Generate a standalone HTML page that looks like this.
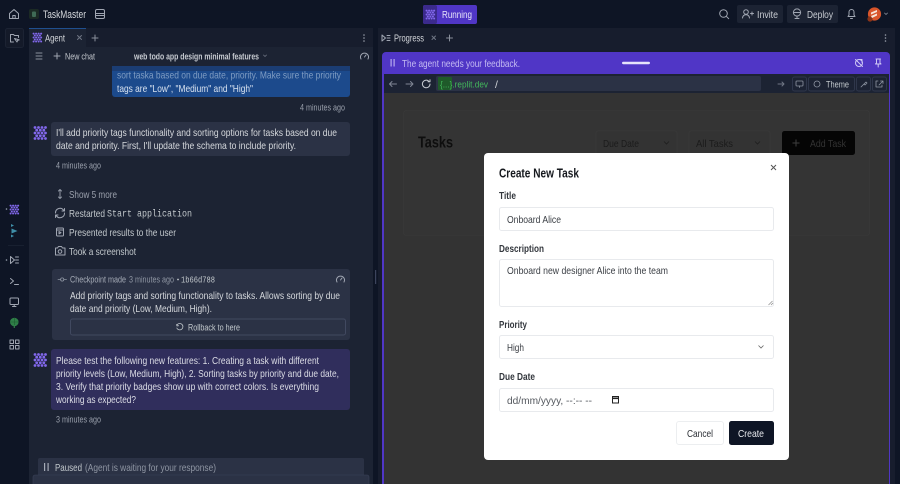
<!DOCTYPE html>
<html><head><meta charset="utf-8"><style>
html,body{margin:0;padding:0;background:#0e1525;width:900px;height:484px;overflow:hidden}
svg{display:block;filter:blur(.3px)}
text{font-family:"Liberation Sans",sans-serif;font-size:10.5px;fill:#c2c8cc}
.i{fill:none;stroke:#a0a6b2;stroke-width:1;stroke-linecap:round;stroke-linejoin:round}
</style></head><body>
<svg width="900" height="484" viewBox="0 0 900 484" xmlns="http://www.w3.org/2000/svg">
<defs>
<g id="ag">
<g fill="#8268ec">
<circle cx="1.500" cy="1.500" r="1.400"/><circle cx="5" cy="1.500" r="1.400"/><circle cx="8.500" cy="1.500" r="1.400"/><circle cx="12" cy="1.500" r="1.400"/>
<circle cx="3.200" cy="4.200" r="1.400"/><circle cx="6.800" cy="4.200" r="1.400"/><circle cx="10.300" cy="4.200" r="1.400"/>
<circle cx="1.500" cy="7" r="1.400"/><circle cx="5" cy="7" r="1.400"/><circle cx="8.500" cy="7" r="1.400"/><circle cx="12" cy="7" r="1.400"/>
<circle cx="3.200" cy="9.800" r="1.400"/><circle cx="6.800" cy="9.800" r="1.400"/><circle cx="10.300" cy="9.800" r="1.400"/>
<circle cx="1.500" cy="12.500" r="1.400"/><circle cx="5" cy="12.500" r="1.400"/><circle cx="8.500" cy="12.500" r="1.400"/><circle cx="12" cy="12.500" r="1.400"/>
</g></g>
</defs>

<!-- base -->
<rect width="900" height="484" fill="#0e1525"/>
<!-- left panel -->
<rect x="29" y="28" width="344" height="456" fill="#1c2333"/>
<rect x="29" y="28" width="344" height="19" fill="#171d2d"/>
<rect x="29" y="28" width="57" height="19" fill="#1c2333"/>
<rect x="29" y="28" width="57" height="1" fill="#1f4f8f"/>
<!-- right panel -->
<rect x="378" y="28" width="517" height="456" fill="#171d2d"/>
<rect x="375" y="270" width="1.200" height="14" fill="#3c445c"/>

<!-- top bar -->
<path class="i" d="M9.500 13.500l4.500-4 4.500 4v5h-9zM12.800 18.500v-3h2.400v3"/>
<rect x="29" y="9" width="10" height="10" rx="2" fill="#1b2a24"/><rect x="32" y="11.500" width="4" height="5.500" rx="1" fill="#3f6b55"/>
<text x="43" y="18" textLength="43" lengthAdjust="spacingAndGlyphs" style="font-size:11px;fill:#d5d8dc">TaskMaster</text>
<g class="i"><rect x="95.500" y="9.500" width="9" height="9" rx="1.500"/><path d="M95.500 13.500h9M95.500 15.500h9"/></g>

<rect x="423" y="5" width="54" height="19" rx="2" fill="#5036c6"/>
<rect x="423" y="5" width="14" height="19" rx="2" fill="#3b2a8c"/>
<use href="#ag" transform="translate(425.500,9.500) scale(.72)"/>
<text x="442" y="18" textLength="30" lengthAdjust="spacingAndGlyphs" style="font-size:10.500px;fill:#e8e5fa">Running</text>

<g class="i"><circle cx="723.500" cy="13.500" r="3.800"/><path d="M726.300 16.300l2.400 2.400"/></g>
<rect x="737" y="5" width="46" height="18" rx="2" fill="#1c2333"/>
<g class="i"><circle cx="746" cy="12" r="2.300"/><path d="M742.500 18c.3-2.500 1.700-3.300 3.500-3.300s3.200.8 3.500 3.300M750.500 13.500h3M752 12v3"/></g>
<text x="757" y="18" textLength="21" lengthAdjust="spacingAndGlyphs" style="font-size:10.500px;fill:#c8ccd2">Invite</text>
<rect x="787" y="5" width="51" height="18" rx="2" fill="#1c2333"/>
<g class="i"><circle cx="797" cy="12.500" r="3.600"/><path d="M793.400 12.500h7.200M797 16v2.500M795 18.500h4"/></g>
<text x="807" y="18" textLength="26" lengthAdjust="spacingAndGlyphs" style="font-size:10.500px;fill:#c8ccd2">Deploy</text>
<path class="i" d="M848 16.500h7l-1-1.500v-3a2.500 2.500 0 0 0-5 0v3zM850.500 18.500h2"/>
<circle cx="874.500" cy="14" r="6.600" fill="#d9552a"/><circle cx="870" cy="19" r="2.600" fill="#8b3317"/>
<path d="M871 12.500l6-2.500v2l-6 2.500zM871 16l6-2.500v2l-5 2.500z" fill="#f6e4d8"/>
<path class="i" style="stroke:#8a909c;stroke-width:.8" d="M884.500 13l1.500 1.500 1.500-1.500"/>

<!-- left rail -->
<rect x="5.500" y="28.500" width="18" height="19" rx="2" fill="#141a29" stroke="#1c2333"/>
<path class="i" d="M10.500 42v-7.500h3l1 1h4v2M10.500 42h3M14.500 38.500l2.500 3.500 .6-1.600 1.600-.5z"/>
<circle cx="6.500" cy="209" r=".8" fill="#9aa2b0"/>
<use href="#ag" transform="translate(9.500,204.500) scale(.72)"/>
<path d="M11 224l3 1.500-3 1.500zM11.500 228.500l6 2.500-6 2.500zM11 234.500l3 1.500-3 1.500z" fill="#3f8fa8"/>
<rect x="8" y="245" width="16" height=".8" fill="#1c2333"/>
<circle cx="6.500" cy="260" r=".8" fill="#9aa2b0"/>
<path class="i" d="M10.500 256.500l4 3.500-4 3.500zM15.500 257h3M15.500 260h3M15.500 263h3"/>
<path class="i" d="M10.500 278.500l3 2.500-3 2.500M14.500 284.500h4"/>
<g class="i"><rect x="10" y="298" width="8.500" height="6.500" rx="1"/><path d="M14.200 304.500v2M12.500 306.500h3.500"/></g>
<circle cx="14.300" cy="322" r="4.300" fill="#2f7f48"/><path d="M14.300 325v3" stroke="#2f7f48" stroke-width="1.200"/><path d="M10 322h8.500M14.300 318v7" stroke="#1c5a30" stroke-width=".6"/>
<g class="i"><rect x="10" y="340" width="3.500" height="3.500"/><rect x="15.500" y="340" width="3.500" height="3.500"/><rect x="10" y="345.500" width="3.500" height="3.500"/><rect x="15.500" y="345.500" width="3.500" height="3.500"/></g>

<!-- agent tab -->
<use href="#ag" transform="translate(32.500,32.500) scale(.72)"/>
<text x="45" y="41.500" textLength="20" lengthAdjust="spacingAndGlyphs" style="font-size:10.500px;fill:#d5d8dc">Agent</text>
<path class="i" style="stroke:#6f7684" d="M77.500 35.500l4 4M81.500 35.500l-4 4"/>
<path class="i" style="stroke:#8a909c" d="M92 38h6M95 35v6"/>
<g fill="#9aa0ac"><circle cx="364" cy="35" r=".8"/><circle cx="364" cy="38" r=".8"/><circle cx="364" cy="41" r=".8"/></g>

<!-- chat header -->
<path class="i" style="stroke:#8a909c" d="M36 53h6M36 56h6M36 59h6"/>
<path class="i" style="stroke:#a0a6b2" d="M54 56h6M57 53v6"/>
<text x="65" y="59.500" textLength="30" lengthAdjust="spacingAndGlyphs" style="font-size:9.500px;fill:#c2c6cc">New chat</text>
<text x="134" y="59.500" textLength="125" lengthAdjust="spacingAndGlyphs" style="font-size:9.500px;fill:#c8ccd2;font-weight:700">web todo app design minimal features</text>
<path class="i" style="stroke:#6f7684;stroke-width:.8" d="M263.500 55l1.500 1.500 1.500-1.500"/>
<path class="i" d="M361 59a4 4 0 1 1 7 0M364.500 57l1.500-2"/>

<!-- user bubble -->
<path d="M112 66h238v28a3 3 0 0 1-3 3H115a3 3 0 0 1-3-3z" fill="#1c4a8c"/>
<rect x="112" y="66" width="238" height="5" fill="#1b3662" opacity=".6"/>
<text x="117" y="78.500" textLength="224" lengthAdjust="spacingAndGlyphs" style="font-size:10.500px;fill:#7f9cc2">sort taska based on due date, priority. Make sure the priority</text>
<text x="117" y="92" textLength="136" lengthAdjust="spacingAndGlyphs" style="font-size:10.500px;fill:#d8e2f0">tags are "Low", "Medium" and "High"</text>
<text x="300" y="110.500" textLength="45" lengthAdjust="spacingAndGlyphs" style="font-size:9.500px;fill:#9aa0ac">4 minutes ago</text>

<!-- agent bubble 1 -->
<use href="#ag" transform="translate(33.500,126)"/>
<rect x="51" y="122" width="299" height="34" rx="3" fill="#2b3245"/>
<text x="56" y="136" textLength="281" lengthAdjust="spacingAndGlyphs" style="font-size:10.500px;fill:#d5d8dc">I'll add priority tags functionality and sorting options for tasks based on due</text>
<text x="56" y="149" textLength="240" lengthAdjust="spacingAndGlyphs" style="font-size:10.500px;fill:#d5d8dc">date and priority. First, I'll update the schema to include priority.</text>
<text x="56" y="168.500" textLength="45" lengthAdjust="spacingAndGlyphs" style="font-size:9.500px;fill:#9aa0ac">4 minutes ago</text>

<!-- actions -->
<path class="i" style="stroke:#8f96a3" d="M60 189.500v9M58.500 191l1.500-1.500 1.500 1.500M58.500 197l1.500 1.500 1.500-1.500"/>
<text x="69" y="198" textLength="48" lengthAdjust="spacingAndGlyphs" style="font-size:10.500px;fill:#9aa0ac">Show 5 more</text>
<path class="i" d="M55.500 213a4.500 4.500 0 0 1 8-3l1 1M64.500 213a4.500 4.500 0 0 1-8 3l-1-1M64.500 208.500v2.500h-2.500M55.500 217.500v-2.500h2.500"/>
<text x="69" y="217" textLength="36" lengthAdjust="spacingAndGlyphs" style="font-size:10.500px;fill:#c2c8cc">Restarted</text>
<text x="107" y="216.500" textLength="85" lengthAdjust="spacingAndGlyphs" style="font-family:'Liberation Mono',monospace;font-size:10px;fill:#c2c8cc">Start application</text>
<g class="i"><rect x="56.500" y="228" width="7" height="8" rx="1"/><path d="M56.500 230h7M59 231.500l2 1.200-2 1.200z"/></g>
<text x="69" y="236" textLength="107" lengthAdjust="spacingAndGlyphs" style="font-size:10.500px;fill:#c2c8cc">Presented results to the user</text>
<g class="i"><path d="M55.500 248h2l1-1.500h3l1 1.500h2.500v7h-9.500z"/><circle cx="60" cy="251.500" r="1.800"/></g>
<text x="69" y="255" textLength="67" lengthAdjust="spacingAndGlyphs" style="font-size:10.500px;fill:#c2c8cc">Took a screenshot</text>

<!-- checkpoint -->
<rect x="52" y="269" width="298" height="71" rx="3" fill="#2b3245"/>
<path class="i" style="stroke:#8f96a3;stroke-width:.8" d="M58 279.500h2.500M64 279.500h2.500"/><circle cx="62.200" cy="279.500" r="1.600" fill="none" stroke="#8f96a3" stroke-width=".8"/>
<text x="70" y="282.500" textLength="56" lengthAdjust="spacingAndGlyphs" style="font-size:9px;fill:#a5abb6">Checkpoint made</text>
<text x="129" y="282.500" textLength="45" lengthAdjust="spacingAndGlyphs" style="font-size:9px;fill:#8f96a3">3 minutes ago</text>
<circle cx="178" cy="279.500" r=".9" fill="#c2c8cc"/>
<text x="181" y="282.500" textLength="34" lengthAdjust="spacingAndGlyphs" style="font-family:'Liberation Mono',monospace;font-size:9px;fill:#c2c8cc">1b66d788</text>
<path class="i" d="M337 282a4 4 0 1 1 7 0M340.500 280l1.500-2"/>
<text x="70" y="299" textLength="270" lengthAdjust="spacingAndGlyphs" style="font-size:10.500px;fill:#d5d8dc">Add priority tags and sorting functionality to tasks. Allows sorting by due</text>
<text x="70" y="312" textLength="142" lengthAdjust="spacingAndGlyphs" style="font-size:10.500px;fill:#d5d8dc">date and priority (Low, Medium, High).</text>
<rect x="70.500" y="319" width="275" height="16" rx="2" fill="#2b3245" stroke="#414960"/>
<path class="i" style="stroke:#c2c8cc;stroke-width:.8" d="M177 325a3.200 3.200 0 1 1-.2 3M176.500 324.500l.5 1.500 1.500-.3"/>
<text x="188" y="330.500" textLength="52" lengthAdjust="spacingAndGlyphs" style="font-size:9px;fill:#c2c8cc">Rollback to here</text>

<!-- agent bubble 2 -->
<use href="#ag" transform="translate(33.500,353)"/>
<rect x="51" y="349" width="299" height="61" rx="3" fill="#302e5c"/>
<text x="56" y="364" textLength="263" lengthAdjust="spacingAndGlyphs" style="font-size:10.500px;fill:#dcdde6">Please test the following new features: 1. Creating a task with different</text>
<text x="56" y="377" textLength="283" lengthAdjust="spacingAndGlyphs" style="font-size:10.500px;fill:#dcdde6">priority levels (Low, Medium, High), 2. Sorting tasks by priority and due date,</text>
<text x="56" y="390" textLength="263" lengthAdjust="spacingAndGlyphs" style="font-size:10.500px;fill:#dcdde6">3. Verify that priority badges show up with correct colors. Is everything</text>
<text x="56" y="403" textLength="80" lengthAdjust="spacingAndGlyphs" style="font-size:10.500px;fill:#dcdde6">working as expected?</text>
<text x="56" y="422.500" textLength="45" lengthAdjust="spacingAndGlyphs" style="font-size:9.500px;fill:#9aa0ac">3 minutes ago</text>

<!-- paused -->
<rect x="38" y="458" width="326" height="20" rx="2" fill="#2b3245"/>
<rect x="44" y="463" width="1.200" height="8" fill="#a5abb6"/><rect x="47.500" y="463" width="1.200" height="8" fill="#a5abb6"/>
<text x="55" y="471" textLength="27" lengthAdjust="spacingAndGlyphs" style="font-size:10.500px;fill:#c2c8cc">Paused</text>
<text x="85" y="471" textLength="131" lengthAdjust="spacingAndGlyphs" style="font-size:10.500px;fill:#8f96a3">(Agent is waiting for your response)</text>
<rect x="33" y="475" width="336" height="12" rx="2" fill="#2b3245" stroke="#3a4258" stroke-width=".6"/>

<!-- progress tab -->
<path class="i" d="M382 35l3.500 3-3.500 3zM387 35.500h3M387 38h3M387 40.500h3"/>
<text x="394" y="41.500" textLength="30" lengthAdjust="spacingAndGlyphs" style="font-size:10.500px;fill:#d5d8dc">Progress</text>
<path class="i" style="stroke:#6f7684" d="M432 36l3.500 3.500M435.500 36l-3.500 3.500"/>
<path class="i" style="stroke:#8a909c" d="M446.500 38h6M449.500 35v6"/>
<g fill="#9aa0ac"><circle cx="885.500" cy="35" r=".8"/><circle cx="885.500" cy="38" r=".8"/><circle cx="885.500" cy="41" r=".8"/></g>

<!-- purple frame -->
<path d="M382 56a4 4 0 0 1 4-4h500a4 4 0 0 1 4 4v428H382z" fill="#5036c6"/>
<rect x="390.500" y="59" width="1.200" height="7.500" fill="#b7abee"/><rect x="393.500" y="59" width="1.200" height="7.500" fill="#b7abee"/>
<text x="402" y="67" textLength="118" lengthAdjust="spacingAndGlyphs" style="font-size:10.500px;fill:#c4bbf2">The agent needs your feedback.</text>
<rect x="622" y="61.800" width="28" height="2.400" rx="1.200" fill="#e6e2fa"/>
<g class="i" style="stroke:#cfc8f5"><circle cx="859" cy="63" r="3.500"/><path d="M855.500 59.500l7 7M862 59.500h-3M862 59.500v3"/></g>
<path class="i" style="stroke:#cfc8f5" d="M876 59h4.500M876.500 59v4l-1 1h5.500l-1-1v-4M878.200 64v3"/>

<!-- url bar -->
<rect x="384" y="74" width="505" height="19" fill="#1c2333"/>
<path class="i" style="stroke:#7f8694" d="M389.500 84h7M392 81.500l-2.500 2.500 2.500 2.500"/>
<path class="i" style="stroke:#7f8694" d="M406 84h7M410.500 81.500l2.500 2.500-2.500 2.500"/>
<path class="i" style="stroke:#c8ccd2" d="M430 84a3.800 3.800 0 1 1-1.200-2.800M430 79.800v2h-2"/>
<rect x="436" y="76" width="325" height="15" rx="2" fill="#2b3245"/>
<rect x="438" y="77" width="14" height="13" rx="1" fill="#1f5a2a"/>
<text x="440" y="87.500" textLength="48" lengthAdjust="spacingAndGlyphs" style="font-size:9.500px;fill:#43b85c">{...}.replit.dev</text>
<text x="495" y="88" style="font-size:10.500px;fill:#d5d8dc">/</text>
<path class="i" style="stroke:#6f7684" d="M778 84h6M782 82l2 2-2 2"/>
<rect x="792.500" y="77" width="14" height="14" rx="2" fill="#1c2333" stroke="#2f374b"/>
<g class="i" style="stroke:#8f96a3;stroke-width:.8"><rect x="796" y="81" width="7" height="5" rx=".8"/><path d="M799.500 86v1.500"/></g>
<rect x="808.500" y="77" width="46" height="14" rx="2" fill="#1c2333" stroke="#2f374b"/>
<circle cx="817" cy="84" r="3" fill="none" stroke="#8f96a3" stroke-width=".8"/>
<text x="826" y="87.500" textLength="23" lengthAdjust="spacingAndGlyphs" style="font-size:9.500px;fill:#c2c8cc">Theme</text>
<rect x="856.500" y="77" width="14" height="14" rx="2" fill="#1c2333" stroke="#2f374b"/>
<path class="i" style="stroke:#8f96a3;stroke-width:.8" d="M861 87l3-3M864 84l2-2 1 1-2 2z"/>
<rect x="872.500" y="77" width="14" height="14" rx="2" fill="#1c2333" stroke="#2f374b"/>
<path class="i" style="stroke:#8f96a3;stroke-width:.8" d="M878 81h-2v6h6v-2M879 85l4-4M880.500 81h2.500v2.500"/>

<!-- dimmed app -->
<rect x="384" y="93" width="505" height="391" fill="#333333"/>
<rect x="403.500" y="110.500" width="466" height="125" rx="3" fill="#343434" stroke="#393939" stroke-width=".8"/>
<text x="418" y="147.500" textLength="35" lengthAdjust="spacingAndGlyphs" style="font-size:16px;fill:#0e0e0e;font-weight:700">Tasks</text>
<rect x="596" y="131" width="81" height="24" rx="2" fill="#333" stroke="#393939" stroke-width=".8"/>
<text x="603" y="147" textLength="36" lengthAdjust="spacingAndGlyphs" style="font-size:10.500px;fill:#1b1b1b">Due Date</text>
<path fill="none" stroke="#1e1e1e" stroke-width=".8" d="M664 141.500l2.500 2.500 2.500-2.500"/>
<rect x="689" y="131" width="81" height="24" rx="2" fill="#333" stroke="#393939" stroke-width=".8"/>
<text x="696" y="147" textLength="37" lengthAdjust="spacingAndGlyphs" style="font-size:10.500px;fill:#1b1b1b">All Tasks</text>
<path fill="none" stroke="#1e1e1e" stroke-width=".8" d="M755 141.500l2.500 2.500 2.500-2.500"/>
<rect x="782" y="131" width="73" height="24" rx="2.500" fill="#050505"/>
<path stroke="#3f3f3f" stroke-width="1" d="M792.500 143h7M796 139.500v7"/>
<text x="810" y="147" textLength="36" lengthAdjust="spacingAndGlyphs" style="font-size:10.500px;fill:#333">Add Task</text>

<!-- modal -->
<rect x="484" y="153" width="305" height="307" rx="4" fill="#ffffff"/>
<text x="499" y="177.500" textLength="80" lengthAdjust="spacingAndGlyphs" style="font-size:13px;fill:#16191e;font-weight:700">Create New Task</text>
<path fill="none" stroke="#555" stroke-width="1" d="M771 165l5 5M776 165l-5 5"/>

<text x="499" y="199" textLength="17" lengthAdjust="spacingAndGlyphs" style="font-size:10.500px;fill:#33373d;font-weight:700">Title</text>
<rect x="499.500" y="207.500" width="274" height="23" rx="2" fill="#fff" stroke="#e8eaed"/>
<text x="507" y="223" textLength="54" lengthAdjust="spacingAndGlyphs" style="font-size:10.500px;fill:#3a3e44">Onboard Alice</text>

<text x="499" y="252" textLength="45" lengthAdjust="spacingAndGlyphs" style="font-size:10.500px;fill:#33373d;font-weight:700">Description</text>
<rect x="499.500" y="259.500" width="274" height="47" rx="2" fill="#fff" stroke="#e8eaed"/>
<text x="507" y="274" textLength="161" lengthAdjust="spacingAndGlyphs" style="font-size:10.500px;fill:#3a3e44">Onboard new designer Alice into the team</text>
<path stroke="#8a8a8a" stroke-width=".7" d="M768.500 305l4-4M771 305l2-2"/>

<text x="499" y="328" textLength="28" lengthAdjust="spacingAndGlyphs" style="font-size:10.500px;fill:#33373d;font-weight:700">Priority</text>
<rect x="499.500" y="335.500" width="274" height="23" rx="2" fill="#fff" stroke="#e8eaed"/>
<text x="507" y="351" textLength="17" lengthAdjust="spacingAndGlyphs" style="font-size:10.500px;fill:#3a3e44">High</text>
<path fill="none" stroke="#666" stroke-width=".8" d="M758.500 345.500l2.500 2.500 2.500-2.500"/>

<text x="499" y="380" textLength="36" lengthAdjust="spacingAndGlyphs" style="font-size:10.500px;fill:#33373d;font-weight:700">Due Date</text>
<rect x="499.500" y="388.500" width="274" height="23" rx="2" fill="#fff" stroke="#e8eaed"/>
<text x="507" y="404" textLength="85" lengthAdjust="spacingAndGlyphs" style="font-size:10.500px;fill:#55595f">dd/mm/yyyy, --:-- --</text>
<g fill="none" stroke="#222" stroke-width="1"><rect x="612.500" y="396.500" width="6" height="6.500"/><path d="M612.500 398.300h6" stroke-width="1.600"/></g>

<rect x="676.500" y="421.500" width="47" height="23" rx="2.500" fill="#fff" stroke="#eceef0"/>
<text x="687" y="437" textLength="26" lengthAdjust="spacingAndGlyphs" style="font-size:10.500px;fill:#2a2e34">Cancel</text>
<rect x="729" y="421" width="45" height="24" rx="2.500" fill="#0e1525"/>
<text x="738" y="437" textLength="26" lengthAdjust="spacingAndGlyphs" style="font-size:10.500px;fill:#e8eaee">Create</text>
</svg>
</body></html>
